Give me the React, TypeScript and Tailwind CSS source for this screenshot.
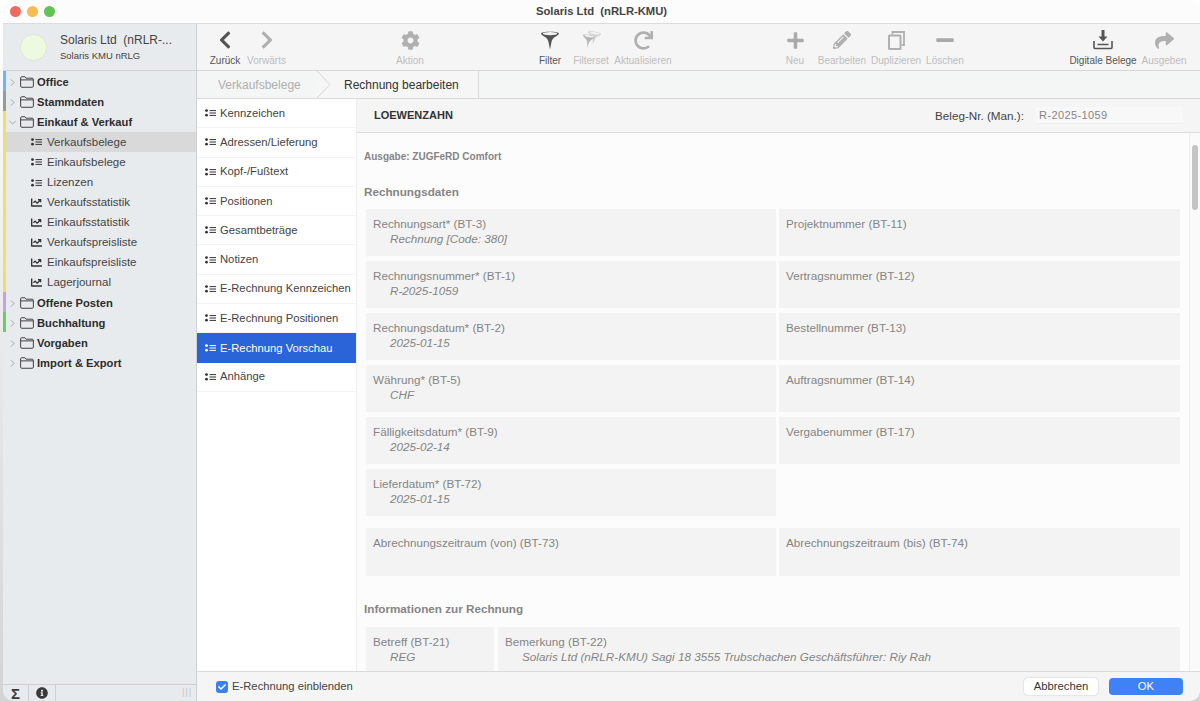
import React from "react";
import { FaCog, FaRedo, FaPlus, FaPencilAlt, FaMinus, FaShare, FaChevronLeft, FaChevronRight, FaChartLine, FaInfoCircle, FaCheck } from "react-icons/fa";

const ListIcon = ({ className = "" }: { className?: string }) => (
  <svg width="11" height="8" viewBox="0 0 11 8" className={className}>
    <circle cx="1.5" cy="1.6" r="1.4" fill="currentColor" />
    <circle cx="1.5" cy="6.2" r="1.4" fill="currentColor" />
    <path d="M4.5 1.6H11M4.5 4H11M4.5 6.4H11" stroke="currentColor" strokeWidth="1" fill="none" />
  </svg>
);
const FolderIcon = () => (
  <svg width="14" height="12" viewBox="0 0 15 13" className="text-[#333]">
    <path d="M.6 11V2c0-.7.5-1.2 1.2-1.2h3.4l1.4 1.600h6.600c.7 0 1.200.5 1.200 1.200V11c0 .7-.5 1.200-1.200 1.200H1.800C1.100 12.200.6 11.700.6 11zM.6 4.200h13.800" fill="none" stroke="currentColor" strokeWidth="1" />
  </svg>
);
const Caret = ({ open }: { open?: boolean }) => (
  <svg width="7" height="9" viewBox="0 0 9 9" className="text-[#9a9a9a]">
    <path d={open ? "M.5 2.500 4.500 6.500 8.500 2.500" : "M2.500.5 6.500 4.500 2.500 8.500"} fill="none" stroke="currentColor" strokeWidth="1.100" />
  </svg>
);
const FunnelIcon = () => (
  <svg width="20" height="20" viewBox="0 0 20 20" className="text-[#555]">
    <path d="M1 3.500C1 1 19 1 19 3.500c0 1-1.500 2-4 3.600-1.600 1-3 2.500-3.500 4.900L10 19.500l-1.500-7.500C8 9.600 6.600 8.100 5 7.100 2.500 5.500 1 4.500 1 3.500z" fill="currentColor" />
    <ellipse cx="10" cy="3.700" rx="7.200" ry="1.600" fill="#f5f5f5" />
  </svg>
);
const FiltersetIcon = () => (
  <svg width="20" height="20" viewBox="0 0 20 20" className="text-[#b5b5b5]">
    <g transform="rotate(10 10 10)">
      <path d="M6 2.500C6 .8 19 .8 19 2.500c0 .8-1.200 1.700-3 2.900-1.200.9-2 2-2.300 3.600L12.500 14l-1-5C11.200 7.400 10 6.300 8.900 5.400 7.200 4.200 6 3.300 6 2.500z" fill="currentColor" opacity=".55" />
      <ellipse cx="12.500" cy="2.600" rx="5" ry="1" fill="#f5f5f5" />
      <path d="M1 6.500C1 4.500 14 4.500 14 6.500c0 .8-1.200 1.800-3 3-1.200.9-2 2-2.300 3.600L7.500 19l-1-5.900C6.200 11.500 5 10.400 3.900 9.500 2.200 8.300 1 7.300 1 6.500z" fill="currentColor" stroke="#f5f5f5" strokeWidth=".5" />
      <ellipse cx="7.500" cy="6.600" rx="4.600" ry="1" fill="#f0f0f0" />
    </g>
  </svg>
);
const CopyIcon = () => (
  <svg width="17" height="19" viewBox="0 0 17 19" className="text-[#b0b0b0]">
    <path d="M4.500 3.500V1H16v13h-2.500" fill="none" stroke="currentColor" strokeWidth="1.800" />
    <rect x="1" y="4.500" width="11.500" height="13.500" rx=".5" fill="none" stroke="currentColor" strokeWidth="2" />
  </svg>
);
const TrayIcon = () => (
  <svg width="20" height="20" viewBox="0 0 20 20" className="text-[#555]">
    <path d="M8.500 0h3v6.500h3L10 11.500 5.500 6.500h3z" fill="currentColor" />
    <path d="M1 11v6.500c0 .6.400 1 1 1h16c.6 0 1-.4 1-1V11" fill="none" stroke="currentColor" strokeWidth="1.600" />
    <path d="M4.500 14.500h11" stroke="currentColor" strokeWidth="1.500" />
  </svg>
);

const Tool = ({ label, icon, on, w }: { label: string; icon: React.ReactNode; on?: boolean; w: string }) => (
  <div className={`${w} shrink-0 flex flex-col items-center`}>
    <div className="h-[20px] flex items-center justify-center">{icon}</div>
    <span className={`mt-[4px] text-[10px] leading-[13px] whitespace-nowrap ${on ? "text-[#555]" : "text-[#bdbdbd]"}`}>{label}</span>
  </div>
);

const Group = ({ label, open }: { label: string; open?: boolean }) => (
  <div className="h-[20.100px] flex items-center pl-[6px]">
    <span className="w-[11px] flex justify-start"><Caret open={open} /></span>
    <FolderIcon />
    <span className="ml-[3px] font-bold text-[11.200px] text-[#2c2c2c]">{label}</span>
  </div>
);
const Sub = ({ label, chart, active }: { label: string; chart?: boolean; active?: boolean }) => (
  <div className={`h-[20.100px] flex items-center pl-[25px] text-[#444] ml-[3px] ${active ? "bg-[#d9d9d9]" : ""}`}>
    <span className="w-[16px] flex">{chart ? <FaChartLine size={11} className="text-[#333]" /> : <ListIcon className="text-[#333]" />}</span>
    <span className="text-[11.500px]">{label}</span>
  </div>
);

const middle = ["Kennzeichen", "Adressen/Lieferung", "Kopf-/Fußtext", "Positionen", "Gesamtbeträge", "Notizen", "E-Rechnung Kennzeichen", "E-Rechnung Positionen", "E-Rechnung Vorschau", "Anhänge"];

const Card = ({ label, value, className = "" }: { label: string; value?: string; className?: string }) => (
  <div className={`bg-[#f3f3f3] h-[47px] pl-[7px] pt-[7px] text-[11.700px] leading-[15px] text-[#858585] ${className}`}>
    <div className="whitespace-nowrap">{label}</div>
    {value && <div className="pl-[17px] italic whitespace-nowrap">{value}</div>}
  </div>
);

const rows: [string, string, string][] = [
  ["Rechnungsart* (BT-3)", "Rechnung [Code: 380]", "Projektnummer (BT-11)"],
  ["Rechnungsnummer* (BT-1)", "R-2025-1059", "Vertragsnummer (BT-12)"],
  ["Rechnungsdatum* (BT-2)", "2025-01-15", "Bestellnummer (BT-13)"],
  ["Währung* (BT-5)", "CHF", "Auftragsnummer (BT-14)"],
  ["Fälligkeitsdatum* (BT-9)", "2025-02-14", "Vergabenummer (BT-17)"],
];

export default function App() {
  return (
    <div className="w-[1200px] h-[701px] bg-linear-to-b from-white to-[#d4d4d4] overflow-hidden pl-[3px]" style={{ fontFamily: '"Liberation Sans", Arial, sans-serif' }}>
      <div className="w-[1197px] h-[701px] flex flex-col rounded-[10px] overflow-hidden">
        {/* title bar */}
        <div className="h-[24px] shrink-0 relative bg-[#fcfcfc] border-b border-[#dcdcdc] flex items-center justify-center">
          <div className="absolute left-[7px] top-[6px] flex gap-[6px]">
            <span className="w-[11px] h-[11px] rounded-full bg-[#ee6a5f]" />
            <span className="w-[11px] h-[11px] rounded-full bg-[#f5bd4f]" />
            <span className="w-[11px] h-[11px] rounded-full bg-[#61c454]" />
          </div>
          <span className="font-bold text-[11.250px] text-[#444] whitespace-pre">Solaris Ltd  (nRLR-KMU)</span>
        </div>
        <div className="flex-1 flex min-h-0">
          {/* sidebar */}
          <div className="w-[194px] shrink-0 flex flex-col bg-[#e8ebee] border-r border-[#d0d0d0]">
            <div className="h-[47px] shrink-0 border-b border-[#d3d3d3] flex items-center pl-[17px]">
              <span className="w-[27px] h-[27px] rounded-full bg-[#eefadf] border border-[#dfe5d8]" />
              <div className="ml-[13px] text-[#444]">
                <div className="text-[12px] leading-[15px] whitespace-pre">Solaris Ltd  (nRLR-...</div>
                <div className="text-[9.500px] leading-[13px] mt-[1px]">Solaris KMU nRLG</div>
              </div>
            </div>
            <div className="flex-1 relative pt-[1px]">
              <div className="absolute left-0 top-0 w-[3px] h-[20px] bg-[#6fb6f2]" />
              <div className="absolute left-0 top-[20px] w-[3px] h-[20px] bg-[#9a9a9a]" />
              <div className="absolute left-0 top-[40px] w-[3px] h-[181px] bg-[#f5dc63]" />
              <div className="absolute left-0 top-[221px] w-[3px] h-[20px] bg-[#c9a0e6]" />
              <div className="absolute left-0 top-[241px] w-[3px] h-[20px] bg-[#6ccb6a]" />
              <Group label="Office" />
              <Group label="Stammdaten" />
              <Group label="Einkauf & Verkauf" open />
              <Sub label="Verkaufsbelege" active />
              <Sub label="Einkaufsbelege" />
              <Sub label="Lizenzen" />
              <Sub label="Verkaufsstatistik" chart />
              <Sub label="Einkaufsstatistik" chart />
              <Sub label="Verkaufspreisliste" chart />
              <Sub label="Einkaufspreisliste" chart />
              <Sub label="Lagerjournal" chart />
              <Group label="Offene Posten" />
              <Group label="Buchhaltung" />
              <Group label="Vorgaben" />
              <Group label="Import & Export" />
            </div>
            <div className="h-[17px] shrink-0 border-t border-[#cfcfcf] flex items-center text-[#3a3a3a]">
              <span className="w-[26px] h-full border-r border-[#cfcfcf] flex items-center justify-center font-bold text-[15px] leading-none">Σ</span>
              <span className="w-[27px] h-full border-r border-[#cfcfcf] flex items-center justify-center"><FaInfoCircle size={12} /></span>
              <span className="ml-auto mr-[4px] text-[#c5c5c5] text-[9px] tracking-[1px]">|||</span>
            </div>
          </div>
          {/* main */}
          <div className="flex-1 min-w-0 flex flex-col">
            {/* toolbar */}
            <div className="h-[47px] shrink-0 bg-[#f5f5f5] border-b border-[#d6d6d6] flex items-start pt-[6px] pl-[9px]">
              <Tool w="w-[38px]" on label="Zurück" icon={<FaChevronLeft size={20} className="text-[#555]" />} />
              <Tool w="w-[45px]" label="Vorwärts" icon={<FaChevronRight size={20} className="text-[#b0b0b0]" />} />
              <div className="w-[96px] shrink-0" />
              <Tool w="w-[50px]" label="Aktion" icon={<FaCog size={19} className="text-[#b0b0b0]" />} />
              <div className="w-[95px] shrink-0" />
              <Tool w="w-[40px]" on label="Filter" icon={<FunnelIcon />} />
              <Tool w="w-[42px]" label="Filterset" icon={<FiltersetIcon />} />
              <Tool w="w-[62px]" label="Aktualisieren" icon={<FaRedo size={19} className="text-[#b0b0b0]" />} />
              <div className="w-[102px] shrink-0" />
              <Tool w="w-[38px]" label="Neu" icon={<FaPlus size={19} className="text-[#aaaaaa]" />} />
              <Tool w="w-[56px]" label="Bearbeiten" icon={<FaPencilAlt size={18} className="text-[#b0b0b0]" />} />
              <Tool w="w-[52px]" label="Duplizieren" icon={<CopyIcon />} />
              <Tool w="w-[46px]" label="Löschen" icon={<FaMinus size={20} className="text-[#aaaaaa]" />} />
              <div className="w-[102px] shrink-0" />
              <Tool w="w-[66px]" on label="Digitale Belege" icon={<TrayIcon />} />
              <Tool w="w-[56px]" label="Ausgeben" icon={<FaShare size={19} className="text-[#b0b0b0]" />} />
            </div>
            {/* breadcrumb */}
            <div className="h-[28px] shrink-0 bg-[#f4f5f5] border-b border-[#d9d9d9] flex items-stretch">
              <div className="relative w-[121px] flex items-center pl-[21px] text-[12px] text-[#b0b0b0]">
                Verkaufsbelege
                <svg width="14" height="27" viewBox="0 0 14 27" className="absolute right-[-13px] top-0 text-[#d5d5d5]">
                  <path d="M0 0 13 13.500 0 27" fill="none" stroke="currentColor" />
                </svg>
              </div>
              <div className="w-[161px] pl-[26px] flex items-center text-[12px] text-[#333] bg-[#f6f6f6] border-r border-[#d9d9d9]">Rechnung bearbeiten</div>
            </div>
            <div className="flex-1 flex min-h-0">
              {/* middle list */}
              <div className="w-[160px] shrink-0 bg-white border-r border-[#efefef]">
                {middle.map((m) =>
                  m === "E-Rechnung Vorschau" ? (
                    <div key={m} className="h-[29.300px] flex items-center pl-[8px] bg-[#2b64d9] text-white text-[11.250px]">
                      <ListIcon className="mr-[4px] text-white" />
                      {m}
                    </div>
                  ) : (
                    <div key={m} className="h-[29.300px] flex items-center pl-[8px] border-b border-[#f3f3f3] text-[#444] text-[11.250px] whitespace-nowrap">
                      <ListIcon className="mr-[4px] text-[#333]" />
                      {m}
                    </div>
                  )
                )}
              </div>
              {/* content */}
              <div className="flex-1 min-w-0 flex flex-col">
                <div className="h-[34px] shrink-0 bg-[#f5f5f5] border-b border-[#dcdcdc] flex items-center pl-[17px]">
                  <span className="font-bold text-[11px] text-[#333]">LOEWENZAHN</span>
                  <span className="ml-auto text-[11.700px] text-[#444]">Beleg-Nr. (Man.):</span>
                  <div className="ml-[12px] mr-[17px] w-[147px] h-[17px] bg-[#f8f8f8] border-b border-[#efefef] pl-[3px] text-[11px] leading-[17px] text-[#858585] tracking-[0.4px]">R-2025-1059</div>
                </div>
                <div className="flex-1 min-h-0 flex bg-[#fcfcfc] overflow-hidden">
                  <div className="w-[832px] shrink-0 pl-[7px] pr-[9px] overflow-hidden">
                    <div className="mt-[17px] text-[10px] leading-[13px] font-bold text-[#858585]">Ausgabe: ZUGFeRD Comfort</div>
                    <div className="mt-[21px] text-[11.700px] leading-[15px] font-bold text-[#858585]">Rechnungsdaten</div>
                    <div className="pl-[2px] mt-[10px] grid grid-cols-[410px_401px] gap-x-[3px] gap-y-[5px]">
                      {rows.map((r) => (
                        <React.Fragment key={r[0]}>
                          <Card label={r[0]} value={r[1]} />
                          <Card label={r[2]} />
                        </React.Fragment>
                      ))}
                      <Card label="Lieferdatum* (BT-72)" value="2025-01-15" />
                      <div />
                      <Card label="Abrechnungszeitraum (von) (BT-73)" className="mt-[7px] !h-[48px]" />
                      <Card label="Abrechnungszeitraum (bis) (BT-74)" className="mt-[7px] !h-[48px]" />
                    </div>
                    <div className="mt-[25px] text-[11.700px] leading-[15px] font-bold text-[#858585]">Informationen zur Rechnung</div>
                    <div className="pl-[2px] mt-[11px] flex gap-[4px]">
                      <Card label="Betreff (BT-21)" value="REG" className="w-[128px] shrink-0" />
                      <Card label="Bemerkung (BT-22)" value="Solaris Ltd (nRLR-KMU) Sagi 18 3555 Trubschachen Geschäftsführer: Riy Rah" className="w-[682px] shrink-0" />
                    </div>
                  </div>
                  <div className="flex-1 border-l border-[#eeeeee] bg-[#fafafa] relative">
                    <div className="absolute right-[2px] top-[12px] w-[6px] h-[65px] rounded-full bg-[#c4c4c4]" />
                  </div>
                </div>
              </div>
            </div>
            {/* footer */}
            <div className="h-[30px] shrink-0 bg-[#f5f5f5] border-t border-[#dadada] flex items-center pl-[19px]">
              <span className="w-[12px] h-[12px] rounded-[3px] bg-[#3b7ff0] flex items-center justify-center text-white"><FaCheck size={8} /></span>
              <span className="ml-[4px] text-[11.250px] text-[#444]">E-Rechnung einblenden</span>
              <button className="ml-auto w-[74px] h-[17px] rounded-[4px] bg-white shadow-[0_0_1.500px_rgba(0,0,0,0.3)] text-[11.250px] text-[#333]">Abbrechen</button>
              <button className="ml-[11px] mr-[17px] w-[74px] h-[17px] rounded-[4px] bg-[#3f82f6] text-[11.250px] text-white">OK</button>
            </div>
          </div>
        </div>
      </div>
    </div>
  );
}
